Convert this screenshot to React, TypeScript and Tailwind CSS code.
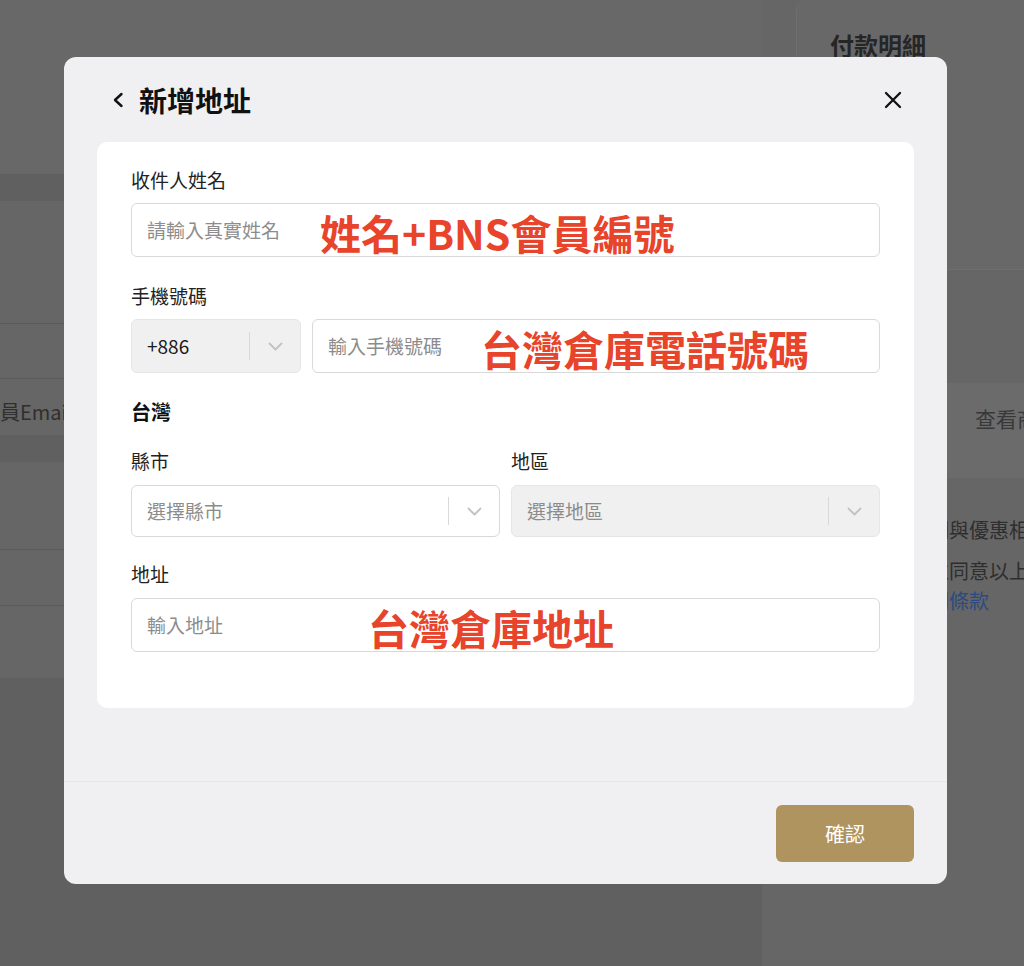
import React from 'react';

function ChevronDown() {
    return (
        <svg width="15" height="9" viewBox="0 0 15 9" fill="none">
            <path d="M1.5 1.5 7.5 7.5 13.5 1.5" stroke="#c2c2c2" strokeWidth="1.8" strokeLinecap="round" strokeLinejoin="round" />
        </svg>
    );
}

function Label({ children }: { children: React.ReactNode }) {
    return <div className="text-[19px] leading-[24px] text-[#222]">{children}</div>;
}

function Note({ children, left }: { children: React.ReactNode; left: string }) {
    return (
        <span className={`absolute top-1/2 -translate-y-1/2 mt-[2px] ${left} text-[41px] leading-none font-bold text-[#e8432b] whitespace-nowrap`}>
            {children}
        </span>
    );
}

function TextInput({ placeholder, children }: { placeholder: string; children?: React.ReactNode }) {
    return (
        <div className="relative h-[54px] flex-1 flex items-center rounded-[6px] border border-[#d9d9d9] bg-white px-[15px]">
            <span className="text-[19px] text-[#8c8c8c]">{placeholder}</span>
            {children}
        </div>
    );
}

interface SelectProps {
    text: string;
    disabled?: boolean;
    filled?: boolean;
    className?: string;
}

function SelectBox({ text, disabled, filled, className }: SelectProps) {
    return (
        <div
            className={`flex items-center rounded-[6px] border ${
                disabled ? 'bg-[#f0f0f0] border-[#e6e6e6]' : 'bg-white border-[#d9d9d9]'
            } ${className}`}>
            <span className={`flex-1 pl-[15px] text-[19px] ${filled ? 'text-[#1a1a1a]' : 'text-[#8c8c8c]'}`}>{text}</span>
            <div className="w-px h-[28px] bg-[#d9d9d9]" />
            <div className="w-[50px] flex items-center justify-center">
                <ChevronDown />
            </div>
        </div>
    );
}

function Background() {
    return (
        <div className="flex w-full h-full">
            <div className="w-[762px] shrink-0 flex flex-col">
                <div className="h-[174px] bg-[#686868] rounded-br-[10px]" />
                <div className="h-[27px] bg-[#606060]" />
                <div className="h-[123px] border-b border-[#5b5b5b]" />
                <div className="h-[55px] border-b border-[#5b5b5b]" />
                <div className="h-[56px] pt-[10px] flex items-center overflow-hidden whitespace-nowrap text-[20px] text-[#2f2f2f]">
                    <span className="-ml-[20px]">會員Email認證</span>
                </div>
                <div className="h-[27px] bg-[#606060]" />
                <div className="h-[88px] border-b border-[#5b5b5b]" />
                <div className="h-[56px] border-b border-[#5b5b5b]" />
                <div className="h-[72px]" />
                <div className="flex-1 bg-[#606060]" />
            </div>
            <div className="ml-[34px] min-w-0 flex-1 overflow-hidden flex flex-col">
                <div className="h-[270px] rounded-tl-[10px] border-l border-b border-[#6f6f6f] bg-[#686868] pl-[33px] pt-[31px]">
                    <div className="text-[24px] leading-[28px] font-bold text-[#262626]">付款明細</div>
                </div>
                <div className="h-[113px]" />
                <div className="h-[95px] bg-[#6b6b6b] pl-[179px] pt-[21px] whitespace-nowrap text-[21px] leading-[28px] text-[#383838]">
                    查看商品明細
                </div>
                <div className="pl-[33px] pt-[37px] whitespace-nowrap text-[20px] leading-[30px] text-[#2e2e2e]">
                    <div>商品折扣說明與優惠相關規定</div>
                    <div className="mt-[11px]">本人已閱讀並同意以上條款</div>
                    <div className="text-[#2c4a80]">服務隱私相關條款</div>
                </div>
            </div>
        </div>
    );
}

export default function App() {
    return (
        <div className="relative w-full h-[966px] overflow-hidden bg-[#666666] font-['Noto_Sans_CJK_TC','Noto_Sans',sans-serif]">
            <Background />

            <div className="absolute left-[64px] top-[57px] w-[883px] rounded-[12px] bg-[#f0f0f2] flex flex-col">
                <div className="h-[85px] flex items-center pl-[48px] pr-[45px]">
                    <svg width="12" height="16" viewBox="0 0 12 16" fill="none">
                        <path d="M9.5 2 3 8l6.5 6" stroke="#111" strokeWidth="2.4" strokeLinecap="round" strokeLinejoin="round" />
                    </svg>
                    <h1 className="ml-[15px] flex-1 text-[28px] leading-none font-bold text-[#111]">新增地址</h1>
                    <svg width="18" height="18" viewBox="0 0 18 18" fill="none">
                        <path d="M2 2l14 14M16 2 2 16" stroke="#111" strokeWidth="2.3" strokeLinecap="round" />
                    </svg>
                </div>

                <div className="mx-[33px] rounded-[10px] bg-white px-[34px] pt-[26px] pb-[56px]">
                    <Label>收件人姓名</Label>
                    <div className="mt-[11px] flex">
                        <TextInput placeholder="請輸入真實姓名">
                            <Note left="left-[188px]">姓名+BNS會員編號</Note>
                        </TextInput>
                    </div>

                    <div className="mt-[27px]">
                        <Label>手機號碼</Label>
                    </div>
                    <div className="mt-[11px] flex gap-[11px]">
                        <SelectBox text="+886" disabled filled className="w-[170px] h-[54px]" />
                        <TextInput placeholder="輸入手機號碼">
                            <Note left="left-[168px]">台灣倉庫電話號碼</Note>
                        </TextInput>
                    </div>

                    <div className="mt-[27px] text-[20px] leading-[24px] font-bold text-[#111]">台灣</div>

                    <div className="mt-[25px] grid grid-cols-2 gap-x-[11px]">
                        <div>
                            <Label>縣市</Label>
                            <SelectBox text="選擇縣市" className="mt-[12px] h-[52px]" />
                        </div>
                        <div>
                            <Label>地區</Label>
                            <SelectBox text="選擇地區" disabled className="mt-[12px] h-[52px]" />
                        </div>
                    </div>

                    <div className="mt-[25px]">
                        <Label>地址</Label>
                    </div>
                    <div className="mt-[12px] flex">
                        <TextInput placeholder="輸入地址">
                            <Note left="left-[236px]">台灣倉庫地址</Note>
                        </TextInput>
                    </div>
                </div>

                <div className="mt-[73px] border-t border-[#e6e6e8] pt-[23px] pb-[22px] pr-[33px] flex justify-end">
                    <button className="w-[138px] h-[57px] rounded-[6px] bg-[#b09460] text-[20px] text-white">確認</button>
                </div>
            </div>
        </div>
    );
}
